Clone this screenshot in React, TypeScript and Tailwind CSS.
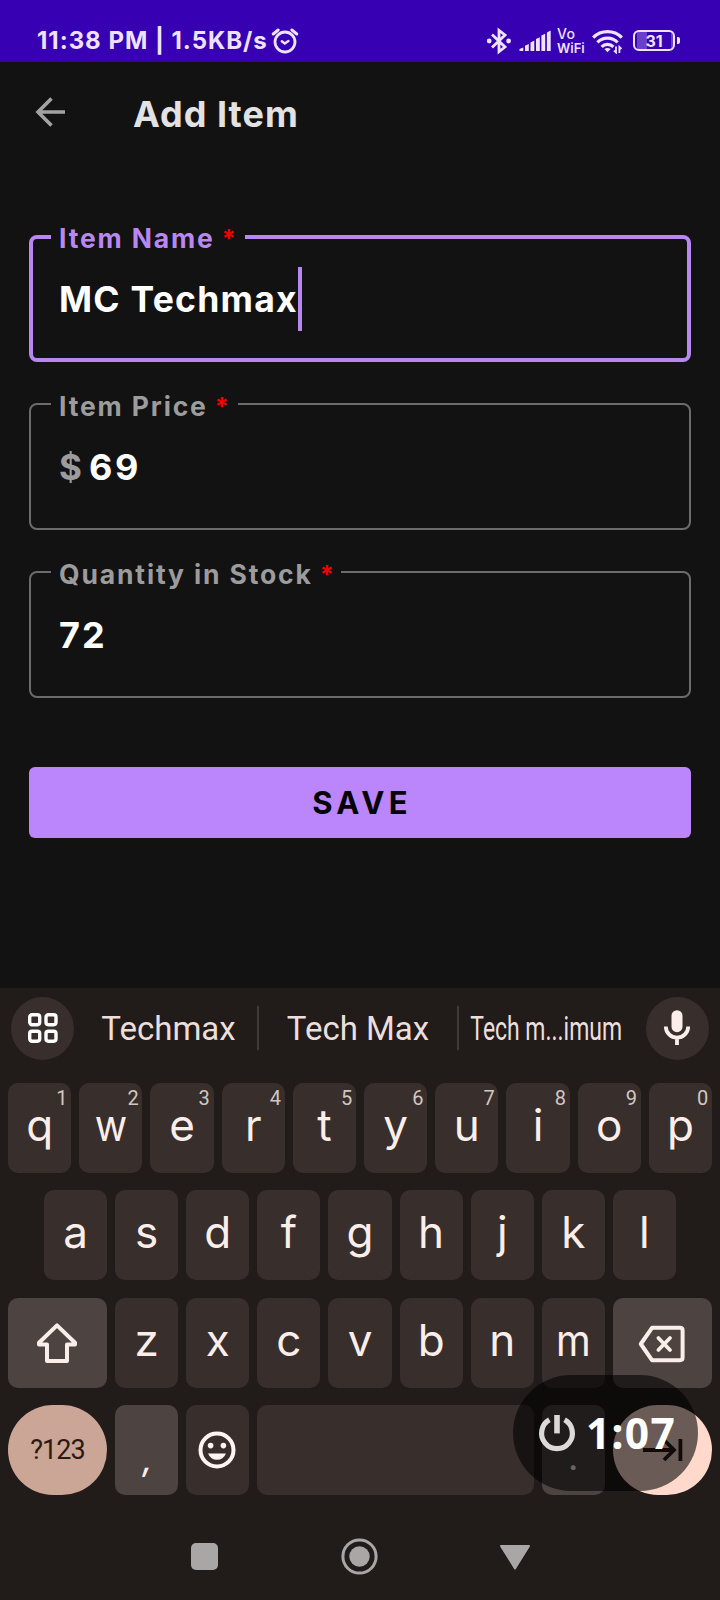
import React from "react";

function AlarmIcon() {
  return (
    <svg width="28" height="28" viewBox="0 0 28 28" fill="none" stroke="#efe2ff" strokeLinecap="round" strokeLinejoin="round">
      <circle cx="14" cy="15" r="10" strokeWidth="2.8" />
      <path d="M10.8 14.2 13.8 16.6 17.4 14" strokeWidth="2.5" />
      <path d="M2.2 7 7.2 3M25.8 7 20.8 3" strokeWidth="3" />
    </svg>
  );
}

function BluetoothIcon() {
  return (
    <svg width="26" height="28" viewBox="0 0 26 28" fill="none" stroke="#efe2ff" strokeWidth="2.8" strokeLinejoin="miter">
      <path d="M6 7.5 19 20 13 24.6V3.4L19 8 6 20.5" />
      <circle cx="3.2" cy="14" r="2.4" fill="#efe2ff" stroke="none" />
      <circle cx="22.6" cy="14" r="2.4" fill="#efe2ff" stroke="none" />
    </svg>
  );
}

function SignalIcon() {
  return (
    <svg width="33" height="22" viewBox="0 0 33 22" fill="#efe2ff">
      <path d="M0.5 21V19L4.3 17.4V21ZM6 21V15.8L9.8 14V21ZM11.5 21V12.4L15.3 10.6V21ZM17 21V9L20.8 7.2V21ZM22.4 21V5.6L26.2 3.8V21ZM27.9 21V2.4L31.7 0.6V21Z" />
    </svg>
  );
}

function WifiIcon() {
  return (
    <svg width="31" height="26" viewBox="0 0 31 26" fill="none" stroke="#efe2ff">
      <path d="M1.2 9.6A20.2 20.2 0 0 1 29.8 9.6" strokeWidth="3.4" />
      <path d="M5.4 14.4A14.2 14.2 0 0 1 25.6 14.4" strokeWidth="3.2" />
      <path d="M9.6 18.8A8.4 8.4 0 0 1 21.4 18.8" strokeWidth="3.2" />
      <path d="M12.4 21Q15.5 18.8 18.6 21L15.5 24.2Z" fill="#efe2ff" stroke="none" />
      <path d="M24 18.4V24.5L22 22.6M27.4 25V19L29.4 21" strokeWidth="1.8" />
    </svg>
  );
}

function StatusBar() {
  return (
    <div className="flex h-[62px] items-center bg-[#3700b3] pt-[19px] pl-[37px] text-[#efe2ff]">
      <span className="w-[234px] whitespace-nowrap text-[24px] leading-[30px] font-bold tracking-[0.98px]">
        11:38 PM | 1.5KB/s
      </span>
      <AlarmIcon />
      <div className="ml-[187px] flex items-center">
        <BluetoothIcon />
        <span className="ml-[7px]">
          <SignalIcon />
        </span>
        <div className="ml-[5px] flex w-[30px] flex-col">
          <span className="text-[14px] leading-[15px] font-medium tracking-[0.4px]">Vo</span>
          <span className="text-[13px] leading-[14px] font-semibold">WiFi</span>
        </div>
        <span className="ml-[5px]">
          <WifiIcon />
        </span>
        <div className="ml-[10px] flex h-[21px] w-[42px] items-center justify-center rounded-[6px] border-2 border-[#efe2ff] bg-linear-to-r from-[#6a3fc9] from-30% to-transparent to-30% bg-origin-content p-[2px]">
          <span className="text-[16px] leading-[16px] font-bold">31</span>
        </div>
        <div className="ml-[2px] h-[7px] w-[3px] rounded-r-[2px] bg-[#efe2ff]" />
      </div>
    </div>
  );
}

type FieldProps = {
  label: string;
  notch: string;
  focused?: boolean;
  children: React.ReactNode;
};

function Field({ label, notch, focused, children }: FieldProps) {
  return (
    <fieldset
      className={
        focused
          ? "h-[127px] rounded-[8px] border-4 border-[#b888f0]"
          : "h-[127px] rounded-[8px] border-2 border-[#6b6b6b]"
      }
    >
      <legend
        className={`${notch} whitespace-nowrap text-[26.5px] font-bold tracking-[1.85px] ${
          focused
            ? "ml-[18px] h-[4px] pl-[8px] leading-[6px] text-[#b888f0]"
            : "ml-[20px] h-[2px] pl-[8px] leading-[6px] text-[#9c9c9c]"
        }`}
      >
        {label}
        <span className="ml-[7px] text-[25px] text-[#f40000]">*</span>
      </legend>
      <div
        className={
          focused
            ? "flex h-[119px] items-center pl-[26px] text-[35.5px] leading-[44px] font-bold text-white"
            : "flex h-[123px] items-center pl-[28px] pt-px text-[36px] leading-[44px] font-bold text-white"
        }
      >
        {children}
      </div>
    </fieldset>
  );
}

function Key({ ch, hint }: { ch: string; hint?: string }) {
  const wide = ch === "w" || ch === "m";
  return (
    <div className="relative flex h-[90px] min-w-0 flex-1 items-center justify-center rounded-[10px] bg-[#382f2d] pb-[6px] text-[44px] leading-[44px] text-[#fbeeea]">
      <span className={wide ? "scale-x-90" : ""}>{ch}</span>
      {hint && (
        <span className="absolute top-[5px] right-[4px] w-[11px] text-center font-['Roboto',sans-serif] text-[20px] leading-[20px] text-[#d3c6c2]">
          {hint}
        </span>
      )}
    </div>
  );
}

function Suggestions() {
  return (
    <div className="flex h-[80px] items-center px-[11px] font-['Roboto',sans-serif] text-[33px] leading-[40px] text-[#ecdfdb]">
      <div className="flex size-[63px] shrink-0 items-center justify-center rounded-full bg-[#382f2d]">
        <svg width="30" height="30" viewBox="0 0 30 30" fill="none" stroke="#ffffff" strokeWidth="3.4">
          <rect x="1.7" y="1.7" width="10" height="10" rx="2.4" />
          <rect x="18" y="1.7" width="10" height="10" rx="2.4" />
          <rect x="1.7" y="18.2" width="10" height="10" rx="2.4" />
          <rect x="18" y="18.2" width="10" height="10" rx="2.4" />
        </svg>
      </div>
      <span className="ml-[6px] w-[177px] pt-[2px] text-center">Techmax</span>
      <span className="h-[44px] w-[2px] bg-[#403936]" />
      <span className="w-[198px] pt-[2px] text-center">Tech Max</span>
      <span className="h-[44px] w-[2px] bg-[#403936]" />
      <span className="flex w-[174px] justify-center pt-[2px]">
        <span className="shrink-0 scale-x-[0.695] whitespace-nowrap">Tech m...imum</span>
      </span>
      <div className="ml-auto flex size-[63px] shrink-0 items-center justify-center rounded-full bg-[#382f2d] pr-px">
        <svg width="28" height="38" viewBox="0 0 28 38" fill="none">
          <rect x="8.5" y="1.2" width="11" height="22" rx="5.5" fill="#fbeeea" />
          <path d="M2.8 17.5A11.2 11.2 0 0 0 25.2 17.5M14 28.5V36" stroke="#fbeeea" strokeWidth="3.8" />
        </svg>
      </div>
    </div>
  );
}

function Keyboard() {
  const top = "qwertyuiop".split("");
  return (
    <div className="relative flex h-[612px] flex-col bg-[#211b19]">
      <Suggestions />
      <div className="mt-[15px] flex flex-col gap-[17.4px] px-[8px]">
        <div className="flex gap-[8px]">
          {top.map((c, i) => (
            <Key key={c} ch={c} hint={String((i + 1) % 10)} />
          ))}
        </div>
        <div className="flex gap-[8px] px-[36px]">
          {"asdfghjkl".split("").map((c) => (
            <Key key={c} ch={c} />
          ))}
        </div>
        <div className="flex gap-[8px]">
          <div className="flex h-[90px] w-[99px] items-center justify-center rounded-[10px] bg-[#4d4442] pr-[2px]">
            <svg width="44" height="44" viewBox="0 0 44 44" fill="none" stroke="#fbeeea" strokeWidth="4" strokeLinejoin="round">
              <path d="M22 4.4 40 21.8V23.4H32V40H12V23.4H4V21.8Z" />
            </svg>
          </div>
          {"zxcvbnm".split("").map((c) => (
            <Key key={c} ch={c} />
          ))}
          <div className="flex h-[90px] w-[99px] items-center justify-center rounded-[10px] bg-[#4d4442] pt-[2px]">
            <svg width="48" height="40" viewBox="0 0 48 40" fill="none" stroke="#fbeeea" strokeWidth="4" strokeLinejoin="round" strokeLinecap="round">
              <path d="M14 3.8H42Q44.6 3.8 44.6 6.4V33.6Q44.6 36.2 42 36.2H14L2.8 20Z" />
              <path d="M20.4 14 32 26M32 14 20.4 26" strokeWidth="3.8" />
            </svg>
          </div>
        </div>
        <div className="flex gap-[8px]">
          <div className="flex h-[90px] w-[99px] items-center justify-center rounded-full bg-[#cba595] font-['Roboto',sans-serif] text-[27px] tracking-[-0.9px] text-[#2b1a14]">
            ?123
          </div>
          <div className="flex h-[90px] w-[62.6px] items-end justify-center rounded-[10px] bg-[#4d4442] pb-[17px] pl-[2px] text-[32px] leading-[36px] font-medium text-[#fbeeea] italic">
            ,
          </div>
          <div className="flex h-[90px] w-[63px] items-center justify-center rounded-[10px] bg-[#382f2d]">
            <svg width="38" height="38" viewBox="0 0 38 38" fill="#fff6f3">
              <circle cx="19" cy="19" r="16.5" fill="none" stroke="#fff6f3" strokeWidth="4" />
              <circle cx="12.6" cy="14.6" r="2.8" />
              <circle cx="25.4" cy="14.6" r="2.8" />
              <path d="M10 22.4H28Q25.2 28.8 19 28.8T10 22.4Z" />
            </svg>
          </div>
          <div className="h-[90px] flex-1 rounded-[10px] bg-[#382f2d]" />
          <div className="flex h-[90px] w-[63.5px] items-end justify-center rounded-[10px] bg-[#4d4442] pb-[20px] text-[36px] leading-[36px] text-[#fbeeea]">
            .
          </div>
          <div className="flex h-[90px] w-[99px] items-center justify-center rounded-full bg-[#ffdacc]">
            <svg width="42" height="26" viewBox="0 0 42 26" fill="none" stroke="#2b1a14" strokeWidth="3.8">
              <path d="M1 13H32M22 3 32 13 22 23M38.4 2V24" />
            </svg>
          </div>
        </div>
      </div>
      <div className="flex flex-1 items-center pt-[18px] pl-[191px]">
        <span className="size-[27px] rounded-[5px] bg-[#a9a7a5]" />
        <svg className="ml-[123px]" width="37" height="37" viewBox="0 0 37 37" fill="#a9a7a5">
          <circle cx="18.5" cy="18.5" r="16.6" fill="none" stroke="#a9a7a5" strokeWidth="3" />
          <circle cx="18.5" cy="18.5" r="10.2" />
        </svg>
        <svg className="ml-[121px]" width="32" height="26" viewBox="0 0 32 26" fill="#a9a7a5" stroke="#a9a7a5" strokeWidth="2" strokeLinejoin="round">
          <path d="M2 2H30L16 24.4Z" />
        </svg>
      </div>
      <div className="absolute top-[387px] left-[513px] flex h-[116px] w-[185px] items-center rounded-[58px] bg-black/58 pl-[24px]">
        <svg width="40" height="40" viewBox="0 0 40 40" fill="none" stroke="#dcd9d9" strokeWidth="5.2">
          <path d="M12.4 6.8A15.4 15.4 0 1 0 27.6 6.8" />
          <path d="M20 2V20.4" strokeWidth="5.6" />
        </svg>
        <span className="ml-[9px] font-['Noto_Sans',sans-serif] text-[42.5px] leading-[48px] font-bold tracking-[1.3px] text-white">
          1:07
        </span>
      </div>
    </div>
  );
}

export default function App() {
  return (
    <div className="flex h-[1600px] w-[720px] flex-col overflow-hidden bg-[#121212] font-['Inter',sans-serif]">
      <StatusBar />
      <div className="flex h-[100px] items-center pl-[35px]">
        <svg width="32" height="32" viewBox="0 0 32 32" fill="none" stroke="#a3a3a3" strokeWidth="3.6">
          <path d="M30 16H3M16.5 2.4 3 16 16.5 29.6" />
        </svg>
        <h1 className="ml-[66px] pt-[4px] text-[36px] leading-[44px] font-bold tracking-[1px] text-[#e2e2e2]">
          Add Item
        </h1>
      </div>
      <div className="flex flex-col gap-[41px] pt-[73px] pr-[29px] pl-[29px]">
        <Field label="Item Name" notch="w-[194px]" focused>
          <span className="pt-[2px] tracking-[1.25px]">MC Techmax</span>
          <span className="h-[64px] w-[4px] bg-[#b888f0]" />
        </Field>
        <Field label="Item Price" notch="w-[187px]">
          <span className="text-[35px] text-[#9c9c9c]">$</span>
          <span className="ml-[7px] tracking-[2.6px]">69</span>
        </Field>
        <Field label="Quantity in Stock" notch="w-[290px]">
          <span className="tracking-[2px]">72</span>
        </Field>
      </div>
      <button className="mx-[29px] mt-[69px] h-[71px] rounded-[6px] bg-[#bb86fc] pl-[4px] text-[31px] leading-[40px] font-bold tracking-[4.3px] text-[#050308]">
        SAVE
      </button>
      <div className="mt-[150px]">
        <Keyboard />
      </div>
    </div>
  );
}
